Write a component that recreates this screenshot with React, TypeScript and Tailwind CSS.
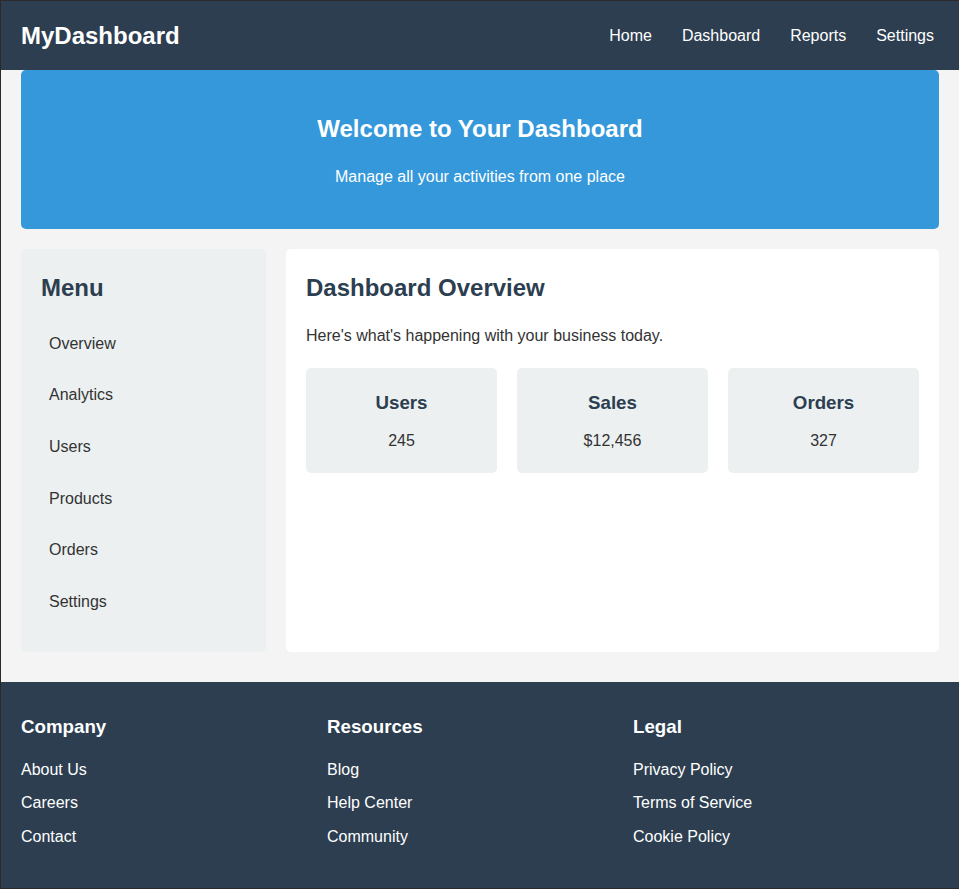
const navLinks = ['Home', 'Dashboard', 'Reports', 'Settings']

const menuItems = ['Overview', 'Analytics', 'Users', 'Products', 'Orders', 'Settings']

const stats = [
  { name: 'Users', value: '245' },
  { name: 'Sales', value: '$12,456' },
  { name: 'Orders', value: '327' }
]

const footerColumns = [
  { title: 'Company', links: ['About Us', 'Careers', 'Contact'] },
  { title: 'Resources', links: ['Blog', 'Help Center', 'Community'] },
  { title: 'Legal', links: ['Privacy Policy', 'Terms of Service', 'Cookie Policy'] }
]

export default function App() {
  return (
    <div className="min-h-[889px] bg-[#f4f4f4] border-l border-t border-b border-[#2a2a2a] font-['Liberation_Sans',Arial,sans-serif] leading-[1.15] text-[16px] text-[#333]">
      {/* top bar */}
      <header className="h-[69px] bg-[#2c3e50] flex items-center justify-between pl-5 pr-[25px]">
        <div className="text-[24px] font-bold text-white">MyDashboard</div>
        <nav className="flex gap-[30px] pt-[1px]">
          {navLinks.map((link) => (
            <a key={link} href="#" className="text-white">
              {link}
            </a>
          ))}
        </nav>
      </header>

      <div className="px-5">
        {/* banner */}
        <section className="bg-[#3498db] rounded-[5px] text-white text-center pt-[45px] pb-[43px]">
          <h1 className="text-[24px] font-bold mb-[25px]">Welcome to Your Dashboard</h1>
          <p>Manage all your activities from one place</p>
        </section>

        <div className="flex gap-5 mt-5">
          <aside className="w-[245px] shrink-0 bg-[#ecf0f1] rounded-[5px] px-5 pt-[25px] pb-6">
            <h2 className="text-[24px] font-bold text-[#2c3e50] mb-[16.6px]">Menu</h2>
            <ul>
              {menuItems.map((item) => (
                <li key={item} className="h-[51.6px] flex items-center px-2">
                  {item}
                </li>
              ))}
            </ul>
          </aside>

          <main className="flex-1 bg-white rounded-[5px] px-5 pt-[25px] pb-5 min-h-[403px]">
            <h2 className="text-[24px] font-bold text-[#2c3e50]">Dashboard Overview</h2>
            <p className="mt-[25px]">Here's what's happening with your business today.</p>
            <div className="grid grid-cols-3 gap-5 mt-[23px]">
              {stats.map((stat) => (
                <div key={stat.name} className="bg-[#ecf0f1] rounded-[5px] text-center pt-6 pb-[23px]">
                  <h3 className="text-[18.72px] font-bold text-[#2c3e50]">{stat.name}</h3>
                  <p className="mt-[18.5px]">{stat.value}</p>
                </div>
              ))}
            </div>
          </main>
        </div>
      </div>

      <footer className="mt-[30px] bg-[#2c3e50] text-white grid grid-cols-3 px-5 pt-[34px] pb-[41.7px]">
        {footerColumns.map((col) => (
          <div key={col.title}>
            <h3 className="text-[18.72px] font-bold mb-[23px]">{col.title}</h3>
            <ul className="flex flex-col gap-[15.3px]">
              {col.links.map((link) => (
                <li key={link}>
                  <a href="#">{link}</a>
                </li>
              ))}
            </ul>
          </div>
        ))}
      </footer>
    </div>
  )
}
